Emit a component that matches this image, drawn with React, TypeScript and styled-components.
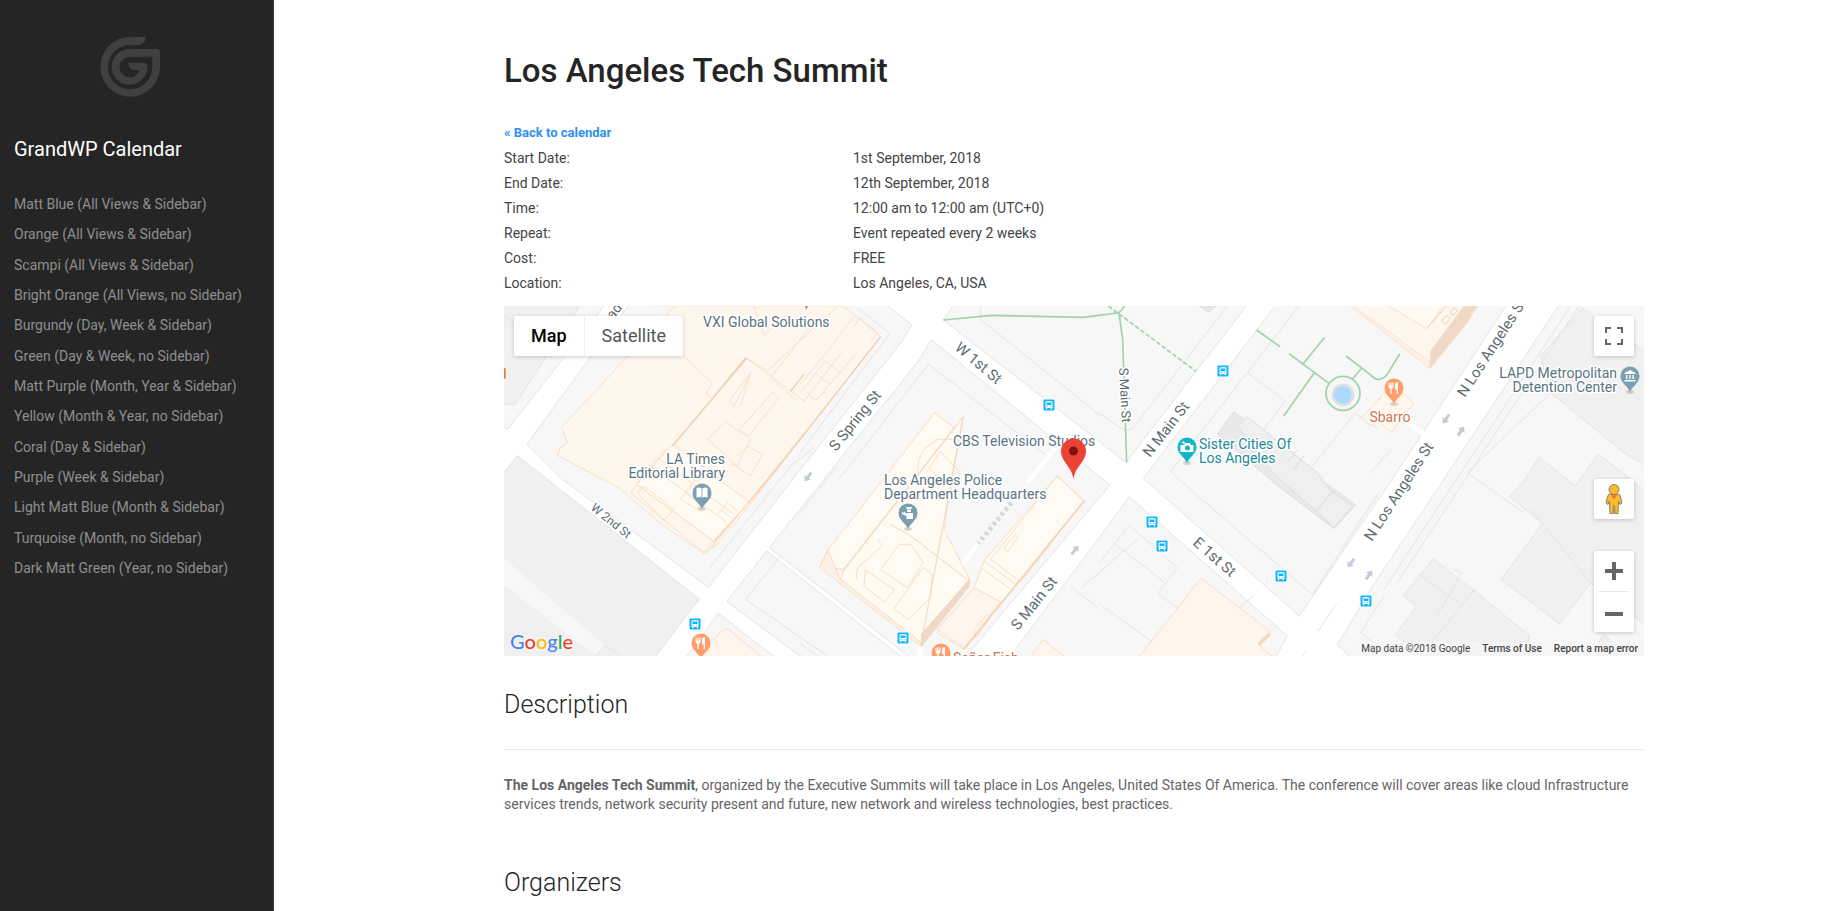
import React from "react";
import styled, { createGlobalStyle } from "styled-components";

const GlobalStyle = createGlobalStyle`
  *, *::before, *::after { box-sizing: border-box; }
  body {
    margin: 0;
    background: #fff;
    color: #444;
    font-family: Roboto, "Liberation Sans", sans-serif;
    font-size: 14px;
  }
`;

const Page = styled.div`
  display: flex;
  min-height: 100vh;
`;

const Sidebar = styled.aside`
  flex: 0 0 274px;
  padding: 37px 14px 0;
  background: #252525;
  border-right: 1px solid #3c3c3c;
`;

const SidebarLogo = styled.svg`
  display: block;
  width: 60px;
  height: 60px;
  margin-left: 86px;
  fill: #404040;
`;

const SidebarTitle = styled.h2`
  margin: 40px 0 0;
  color: #fff;
  font-size: 20px;
  font-weight: 400;
  line-height: 24px;
`;

const MenuList = styled.ul`
  display: grid;
  align-content: space-between;
  min-height: 394px;
  margin: 28px 0 0;
  padding: 0;
  list-style: none;
`;

const MenuLink = styled.a`
  display: block;
  color: #8f8f8f;
  font-size: 14px;
  font-weight: 400;
  line-height: 30px;
  text-decoration: none;
  white-space: nowrap;
`;

const Main = styled.main`
  flex: 1;
  min-width: 0;
  padding: 51px 0 0 34px;
`;

const Content = styled.article`
  max-width: 1140px;
  margin: 0 auto;
`;

const EventTitle = styled.h1`
  margin: 0;
  color: #252525;
  font-size: 33px;
  font-weight: 500;
  line-height: 40px;
`;

const BackLink = styled.a`
  display: inline-block;
  margin-top: 32px;
  color: #2d8ff0;
  font-size: 13px;
  font-weight: 700;
  line-height: 20px;
  text-decoration: none;
`;

const Details = styled.dl`
  display: grid;
  grid-template-columns: 349px 1fr;
  margin: 3px 0 10px;
  line-height: 25px;
`;

const Term = styled.dt``;

const Value = styled.dd`
  margin: 0;
`;

const MapPanel = styled.section`
  position: relative;
  height: 350px;
  overflow: hidden;
  background: #f7f7f7;
`;

const MapCanvas = styled.svg`
  display: block;
  width: 100%;
  height: 100%;
`;

const Controls = styled.div`
  position: absolute;
  inset: 10px 10px 24px;
  display: flex;
  justify-content: space-between;
  align-items: flex-start;
`;

const Card = styled.div`
  display: flex;
  border-radius: 2px;
  background: #fff;
  box-shadow: 0 1px 4px rgba(0, 0, 0, 0.2);
`;

const TypeButton = styled.button<{ $active?: boolean }>`
  height: 40px;
  padding: 0 17px 2px;
  border: 0;
  background: none;
  color: ${(p) => (p.$active ? "#000" : "#565656")};
  font: ${(p) => (p.$active ? 500 : 400)} 18px Roboto, sans-serif;
  & + & {
    border-left: 1px solid #efefef;
  }
`;

const SideControls = styled.div`
  display: flex;
  flex-direction: column;
  height: 316px;
`;

const Spacer = styled.div`
  flex: 1;
`;

const ControlCard = styled(Card)<{ $gap?: number }>`
  flex-direction: column;
  width: 40px;
  margin-top: ${(p) => p.$gap ?? 0}px;
`;

const IconButton = styled.button`
  display: grid;
  place-items: center;
  width: 40px;
  height: 40px;
  padding: 0 0 1px;
  border: 0;
  background: none;
`;

const Rule = styled.div`
  height: 1px;
  margin: 0 5px;
  background: #e6e6e6;
`;

const GoogleMark = styled.a`
  position: absolute;
  left: 6px;
  bottom: 2px;
  font: 500 20px/26px Lato, sans-serif;
  text-decoration: none;
  text-shadow: 0 0 2px #fff;
`;

const Letter = styled.span<{ $color: string }>`
  color: ${(p) => p.$color};
`;

const Attribution = styled.div`
  position: absolute;
  right: 0;
  bottom: 0;
  display: flex;
  background: rgba(245, 245, 245, 0.7);
  color: #444;
  font-size: 10px;
  line-height: 14px;
`;

const Credit = styled.span`
  padding: 0 6px;
`;

const CreditLink = styled.a`
  padding: 0 6px;
  color: #444;
  font-weight: 500;
  text-decoration: none;
`;

const SectionTitle = styled.h3<{ $top: number }>`
  margin: ${(p) => p.$top}px 0 0;
  color: #252525;
  font-size: 25px;
  font-weight: 300;
  line-height: 30px;
`;

const Divider = styled.hr`
  height: 1px;
  margin: 29px 0 26px;
  border: 0;
  background: #e7e7e7;
`;

const Text = styled.p`
  margin: 0;
  color: #666;
  line-height: 19px;
`;

const menu = [
  "Matt Blue (All Views & Sidebar)",
  "Orange (All Views & Sidebar)",
  "Scampi (All Views & Sidebar)",
  "Bright Orange (All Views, no Sidebar)",
  "Burgundy (Day, Week & Sidebar)",
  "Green (Day & Week, no Sidebar)",
  "Matt Purple (Month, Year & Sidebar)",
  "Yellow (Month & Year, no Sidebar)",
  "Coral (Day & Sidebar)",
  "Purple (Week & Sidebar)",
  "Light Matt Blue (Month & Sidebar)",
  "Turquoise (Month, no Sidebar)",
  "Dark Matt Green (Year, no Sidebar)",
];

const details = [
  ["Start Date:", "1st September, 2018"],
  ["End Date:", "12th September, 2018"],
  ["Time:", "12:00 am to 12:00 am (UTC+0)"],
  ["Repeat:", "Event repeated every 2 weeks"],
  ["Cost:", "FREE"],
  ["Location:", "Los Angeles, CA, USA"],
];

const google: [string, string][] = [
  ["G", "#4285f4"],
  ["o", "#ea4335"],
  ["o", "#fbbc05"],
  ["g", "#4285f4"],
  ["l", "#34a853"],
  ["e", "#ea4335"],
];

const SLATE = "#7b9eb0";
const ORANGE = "#ff9e67";
const TEAL = "#12b5cb";

const pinShapes = {
  book: <path d="M-5.500-5Q-2.500-6-.4-4.500V4.500Q-2.500 3.500-5.500 4.500ZM5.500-5Q2.500-6 .4-4.500V4.500Q2.500 3.500 5.500 4.500Z" />,
  police: <path d="M-2-6H4L3-3.500H-1ZM-1-3H3V-1H-1ZM-1.500 0H5V6H-1.500V3L-6 1V-1L-4 0-4-2-2 1Z" />,
  camera: <path fillRule="evenodd" d="M-6.500-2H-3L-2-4H3L4-2H6.500V5H-6.500ZM-5.500-5H-4V-6H-3V-5H-2V-4H-3V-3H-4V-4H-5.500ZM.5-1.500A2.500 2.500 0 1 0 .5 3.500 2.500 2.500 0 1 0 .5-1.500Z" />,
  food: <path d="M-5.500-5.500H-4.500V-2.500H-3.700V-5.500H-2.500V-2.500H-1.700V-5.500H-.5V-1Q-.8.5-2.300.8V6H-3.700V.8Q-5.200.5-5.500-1ZM1-4Q1.500-6 4-6V6H2.700V1.500H1Z" />,
  civic: <path d="M0-6 5.500-3V-2H-5.500V-3ZM-4-1H-2.500V3H-4ZM-.7-1H.7V3H-.7ZM2.500-1H4V3H2.500ZM-5.500 4H5.500V5.500H-5.500Z" />,
};

function Pin({ x, y, color, shape }: { x: number; y: number; color: string; shape: keyof typeof pinShapes }) {
  return (
    <g transform={`translate(${x} ${y})`}>
      <ellipse cy="16" rx="4" ry="2" fill="#000" opacity=".14" />
      <path d="M0 16.500C-1 11-9.500 7.500-9.500 0A9.500 9.500 0 0 1 9.500 0C9.500 7.500 1 11 0 16.500Z" fill={color} />
      <g fill="#fff">{pinShapes[shape]}</g>
    </g>
  );
}

function Bus({ x, y }: { x: number; y: number }) {
  return (
    <g transform={`translate(${x} ${y})`}>
      <rect x="-6.500" y="-6.500" width="13" height="13" rx="1" fill="#fff" />
      <rect x="-5.500" y="-5.500" width="11" height="11" rx="1" fill="#12b5ff" />
      <path fillRule="evenodd" fill="#fff" d="M-3.500-3.500Q0-4.500 3.500-3.500V3H3V4.200H1.800V3H-1.800V4.200H-3V3H-3.500ZM-2.500-2.500V0H2.500V-2.500ZM-2.500 1.200H-1.300V2H-2.500ZM1.300 1.200H2.500V2H1.300Z" />
    </g>
  );
}

function Arrow({ x, y, angle, color = "#c5cccc" }: { x: number; y: number; angle: number; color?: string }) {
  return (
    <path
      transform={`translate(${x} ${y}) rotate(${angle})`}
      fill={color}
      d="M-5.500-1.500H.5V-4L5.500 0 .5 4V1.500H-5.500Z"
    />
  );
}

type LabelProps = {
  x: number;
  y: number;
  angle?: number;
  color?: string;
  size?: number;
  anchor?: "start" | "middle" | "end";
  children: string;
};

function Label({ x, y, angle = 0, color = "#5b7482", size = 14, anchor = "start", children }: LabelProps) {
  return (
    <text
      transform={`translate(${x} ${y}) rotate(${angle})`}
      textAnchor={anchor}
      fontSize={size}
      fill={color}
      stroke="#fff"
      strokeWidth="3"
      strokeLinejoin="round"
      paintOrder="stroke"
    >
      {children}
    </text>
  );
}

const STREET = "#5f6b70";

function StreetMap() {
  return (
    <MapCanvas viewBox="0 0 1140 350" preserveAspectRatio="xMidYMid slice" fontFamily="Roboto, sans-serif" role="img" aria-label="Map of Los Angeles">
      <g transform="scale(.333333)" strokeWidth="3">
        <rect width="3420" height="1050" fill="#fff" />
        {/* city blocks */}
        <g fill="#f7f7f7" stroke="#e3e3e3">
          <path d="M-9-9H307L11 370-9 356Z" />
          <path d="M379-9 68 415 178 522 613 844 888 492 1193 107 1223 57 1142-9Z" />
          <path d="M586 879 133 522 40 449-9 511V1059H449Z" fill="#f0f0f0" />
          <path d="M643 922 543 1059H820Z" />
          <path d="M668 887 788 735 1200 1059H900Z" />
          <path d="M1281 100 1246 162 958 522 796 725 1224 1059H1380L1818 537Z" />
          <path d="M1318 42 1354-9H2234L1866 469Z" />
          <path d="M1918 517 2320-9H3012L2663 522 2386 930Z" />
          <path d="M1876 572 1788 692 1512 1059H2312L2350 990Z" />
          <path d="M3169-9 2818 522 2598 852 2500 1017 2545 1059H3429V-9Z" />
        </g>
        {/* darker lots */}
        <g fill="#f0f0f0" stroke="#e3e3e3">
          <path d="M-9-9H234L33 295H-9ZM-9 20 40 60" />
          <path d="M0 757 348 1059H285L0 837Z" fill="#f7f7f7" stroke="none" />
          <path d="M275 1050 303 1018 350 1050" />
          <path d="M3110 150 3235 6 3429 140V480L3360 440 3350 432 3140 260Z" />
          <path d="M3016 572 3062 522 3100 460 3104 452 3214 540 3283 444 3429 560V960L3260 830 3166 953 2992 820 3116 652Z" />
          <path d="M2787 759 2698 868 2737 902 2674 986 2760 1059H3060L3077 990 2910 853Z" />
          <path d="M3300 985 3270 1030 3290 1059H3380Z" />
        </g>
        <g fill="none" stroke="#e3e3e3">
          <path d="M1158 82 888 440M1158 82 1060 5M1273 175 1005 520M1273 175 1630 450M1430 0V40L1790 330M1788 322Q1850 370 1866 372 1890 372 1900 350L2170 0M2384 0 2230 200 2000 495 2030 525 2425 866 2625 560M2230 200 2344 285 2280 370" />
          <path d="M2425 480 2553 322 2620 366M3200 0 2640 850M3225 0 2680 830M3140 260 2890 500 3060 620M2848 790 2872 800 2820 896 2790 940M2747 806 2872 896M2910 853 2790 1000M3080 610 3260 830M2570 980 2640 870M2570 980 2660 1050M725 880 830 750M725 880 970 1050M888 620 1000 480" />
          <path d="M1876 658 1830 715 1788 770M1876 658 2020 785 1962 862 2110 978 2250 870M1834 715 1980 828M1788 895 1990 1040M1700 840 1788 910M1730 848 1900 700M2498 892 2443 975M2408 1032 2396 1050M2663 430 2598 500M888 1012 940 1050M613 790 860 480 930 425" />
        </g>
        {/* civic complex on N Main St */}
        <g fill="#e9e9e9" stroke="#dcdcdc">
          <path d="M2140 385 2190 317 2450 522 2555 596 2490 668 2310 530Z" />
          <path d="M2200 360 2230 332 2440 500 2484 558 2437 615 2310 505Z" fill="#efefef" />
          <path d="M2484 558 2546 600 2490 665 2437 615ZM2350 470 2380 430M2370 490 2400 450" fill="#efefef" />
          <path d="M2085 0 2115 18 2135 0Z" />
        </g>
        {/* newspaper building */}
        <g fill="#fff6ee" stroke="#fadfc5">
          <path d="M440 0H1018L1130 92 742 590 640 715 600 742 480 660 345 545 160 448 170 425 190 410 172 365 520-9Z" />
          <path d="M505 420 625 275 605 265 625 232 530 140M625 275 725 155 900 285 1012 140M725 155 790 195 1000 0M880 285 800 215 920 60M742 590 900 380M710 300 740 200 690 302 675 285 740 200M805 260 825 275 735 390 705 372ZM612 400 665 345 695 370 740 400 700 480ZM700 450 730 420 775 445 740 510 680 470" fill="none" />
          <path d="M735 590 608 740 630 715 640 680Z" fill="#f2d9c3" />
          <path d="M505 415 735 588 628 705 398 535Z" fill="#fffaf2" />
          <path d="M398 535 380 560 600 740 628 705 398 535 460 455 690 625M440 480 670 650M485 430 448 480 490 510M530 580 575 520 620 560 580 610ZM545 560 590 595M560 540 605 580M640 625 670 590 700 615M650 610 680 635M400 560 420 540 510 610 480 645ZM420 490 460 520M430 475 470 505" fill="none" />
          <path d="M888 235 960 150 1050 30M888 260 965 165 1010 200M905 255 935 285 1055 145M930 200 980 235M1130 92 888 400" fill="none" />
          <path d="M1052 60 1067 35 1120 80 1100 108M750 0 780 88 850 25" fill="none" />
        </g>
        <path d="M505 420 730 155M662 232 724 157M860 255 900 205M1130 92 888 400M888 400 732 592" fill="none" stroke="#efcfb1" strokeWidth="4" />
        {/* alleys */}
        <path d="M1655 425 1570 530M1420 715 1360 795 1248 990V1050" stroke="#fff" strokeWidth="14" fill="none" />
        <path d="M1522 590 1424 712" stroke="#d5d8d8" strokeWidth="14" strokeDasharray="10 9" fill="none" />
        {/* police headquarters */}
        <g fill="#fffaf2" stroke="#fadcc0">
          <path d="M1292 320 1350 365 1022 790 946 784 972 732Z" />
          <path d="M972 732 946 784 1250 1020 1252 985 1008 820Z" fill="#fdf0e4" />
          <path d="M1010 820 1022 785 1378 332 1342 520 1320 670 1398 822 1252 1010Z" />
          <path d="M1220 715 1258 770 1210 845 1135 795 1132 788 1186 715ZM1258 784 1285 805 1280 875 1212 940 1170 908ZM1084 792 1172 850 1140 888 1080 840ZM1060 820Q1045 790 1090 760L1135 720 1120 700M1245 460 1260 430 1300 400H1360M1245 460 1240 500 1265 530M1308 435 1370 500 1340 545 1275 490Z" fill="none" />
          <path d="M1378 332 1252 1010M1378 332 1022 790M1160 655 1220 690 1390 820" fill="none" stroke="#f5d5b8" />
          <path d="M1252 985 1396 820V840L1252 1022Z" fill="#efd9c6" stroke="#efd9c6" />
        </g>
        {/* theatre building */}
        <g fill="#fffaf2" stroke="#fadcc0">
          <path d="M1660 510 1740 585 1380 1030 1300 980 1410 845 1440 765Z" />
          <path d="M1410 845 1490 888 1380 1025 1300 970Z" fill="#fff5ed" />
          <path d="M1660 510 1740 585 1550 828 1460 760ZM1440 765 1535 835M1430 785 1520 850M1500 725 1535 685 1542 692 1510 738ZM1410 970 1450 925 1460 935 1415 995Z" fill="none" />
          <path d="M1742 583 1380 1030" fill="none" stroke="#f2d4ba" strokeWidth="5" />
        </g>
        {/* southern lots */}
        <g fill="#fff5ec" stroke="#fadcc0">
          <path d="M2092 817 2298 977 2262 1015 2312 1059H1900Z" />
          <path d="M655 972Q665 965 675 972L780 1059H575Z" />
          <path d="M1618 1000 1690 1059H1575Z" />
          <path d="M2263 1010 2298 977V990L2268 1018Z" fill="#efd9c6" />
        </g>
        {/* courthouse and restaurant */}
        <g fill="#fff6ee" stroke="#fadfc5">
          <path d="M2535-9 2778 168 2920 0V-9Z" />
          <path d="M2640-9 2768 68 2825-9Z" fill="#fffaf2" />
          <path d="M2778 168V188L2540 0" fill="#fdf0e4" />
          <path d="M2780 135 2880 0H2920L2890 50 2778 188Z" fill="#efd9c6" />
          <path d="M2768 68 2828 0M2812 45 2828 28 2840 38 2824 55ZM2838 20 2850 5 2860 14 2848 28Z" fill="none" stroke="#efcfb1" />
          <path d="M2575 335 2615 290 2668 230 2728 292 2663 378 2620 345 2600 360Z" />
        </g>
        <path d="M2705 345 2760 385" stroke="#fff" strokeWidth="16" />
        {/* footpaths */}
        <g fill="none" stroke="#9fd3a9" strokeWidth="5">
          <path d="M1318 42 1463 28 1738 34 1845 20 1856 102 1868 469M1845 20 1862 0" />
          <path d="M1813 0 2076 196" strokeDasharray="14 6" />
          <path d="M2258 72 2328 122M2355 143 2475 232M2397 174 2462 94M2430 202 2339 330M2545 220 2572 187M2526 150 2598 205Q2625 235 2650 205L2687 144" />
          <circle cx="2517" cy="262" r="51" />
        </g>
        <circle cx="2517" cy="267" r="30" fill="#aadaff" stroke="#e0e0e0" strokeWidth="8" />
        <path d="M2 187V218" stroke="#e2794c" strokeWidth="6" />
      </g>

      <Arrow x={304} y={171} angle={128} />
      <Arrow x={571} y={244} angle={-52} />
      <Arrow x={847} y={257} angle={128} color="#c6cada" />
      <Arrow x={865} y={269} angle={-55} color="#c6cada" />
      <Arrow x={942} y={113} angle={125} />
      <Arrow x={957} y={125} angle={-57} />

      <Label x={109} y={14} angle={-52} color={STREET}>ad</Label>
      <Label x={332} y={146} angle={-51} color={STREET} size={15}>S Spring St</Label>
      <Label x={450} y={43} angle={40} color={STREET} size={15}>W 1st St</Label>
      <Label x={86} y={203} angle={39} color={STREET} size={12}>W 2nd St</Label>
      <Label x={615} y={62} angle={87} color={STREET} size={13}>S Main St</Label>
      <Label x={646} y={152} angle={-52} color={STREET} size={15}>N Main St</Label>
      <Label x={514} y={325} angle={-51} color={STREET} size={15}>S Main St</Label>
      <Label x={688} y={238} angle={41} color={STREET} size={15}>E 1st St</Label>
      <Label x={961} y={92} angle={-57} color={STREET} size={15}>N Los Angeles St</Label>
      <Label x={868} y={236} angle={-57} color={STREET} size={15}>N Los Angeles St</Label>

      <Label x={199} y={21}>VXI Global Solutions</Label>
      <Label x={221} y={158} anchor="end">LA Times</Label>
      <Label x={221} y={172} anchor="end">Editorial Library</Label>
      <Label x={449} y={140}>CBS Television Studios</Label>
      <Label x={380} y={179}>Los Angeles Police</Label>
      <Label x={380} y={193}>Department Headquarters</Label>
      <Label x={695} y={143} color="#1a8c96">Sister Cities Of</Label>
      <Label x={695} y={157} color="#1a8c96">Los Angeles</Label>
      <Label x={886} y={116} color="#d2734c" anchor="middle">Sbarro</Label>
      <Label x={1113} y={72} anchor="end">LAPD Metropolitan</Label>
      <Label x={1113} y={86} anchor="end">Detention Center</Label>
      <Label x={449} y={357} color="#d2734c">Señor Fish</Label>

      <Bus x={191} y={318} />
      <Bus x={545} y={99} />
      <Bus x={399} y={332} />
      <Bus x={719} y={65} />
      <Bus x={648} y={216} />
      <Bus x={658} y={240} />
      <Bus x={777} y={270} />
      <Bus x={862} y={295} />

      <Pin x={198} y={187} color={SLATE} shape="book" />
      <Pin x={404} y={207} color={SLATE} shape="police" />
      <Pin x={683} y={141} color={TEAL} shape="camera" />
      <Pin x={890} y={82} color={ORANGE} shape="food" />
      <Pin x={1126} y={70} color={SLATE} shape="civic" />
      <Pin x={197} y={337} color={ORANGE} shape="food" />
      <Pin x={437} y={347} color={ORANGE} shape="food" />
      <path d="M301 0H304L302.500 4Z" fill={SLATE} />

      <g transform="translate(569.500 145)">
        <path d="M0 28.500C-1 16-12.500 11-12.500 0A12.500 12.500 0 0 1 12.500 0C12.500 11 1 16 0 28.500Z" fill="#ea4335" />
        <circle r="4.500" fill="#811411" />
      </g>
    </MapCanvas>
  );
}

export default function App() {
  return (
    <>
      <GlobalStyle />
      <Page>
        <Sidebar>
          <SidebarLogo viewBox="300 111 180 180" aria-hidden="true">
            <path d="M437 111H390A89.500 89.500 0 1 0 480 201V160Q480 147 467 147H390A53.500 53.500 0 1 0 442 201Q442 188 430 188H384Q386 210 406 210H419A31 31 0 1 1 390 170H457V201A66.500 66.500 0 1 1 390 135H413Q435 135 437 111Z" />
          </SidebarLogo>
          <SidebarTitle>GrandWP Calendar</SidebarTitle>
          <nav>
            <MenuList>
              {menu.map((item) => (
                <li key={item}>
                  <MenuLink href="#">{item}</MenuLink>
                </li>
              ))}
            </MenuList>
          </nav>
        </Sidebar>
        <Main>
          <Content>
            <EventTitle>Los Angeles Tech Summit</EventTitle>
            <BackLink href="#">« Back to calendar</BackLink>
            <Details>
              {details.map(([term, value]) => (
                <React.Fragment key={term}>
                  <Term>{term}</Term>
                  <Value>{value}</Value>
                </React.Fragment>
              ))}
            </Details>
            <MapPanel>
              <StreetMap />
              <Controls>
                <Card>
                  <TypeButton $active>Map</TypeButton>
                  <TypeButton>Satellite</TypeButton>
                </Card>
                <SideControls>
                  <ControlCard>
                    <IconButton aria-label="Toggle fullscreen">
                      <svg width="18" height="18" fill="#666" aria-hidden="true">
                        <path d="M0 0H6V2H2V6H0ZM12 0H18V6H16V2H12ZM0 12H2V16H6V18H0ZM16 12H18V18H12V16H16Z" />
                      </svg>
                    </IconButton>
                  </ControlCard>
                  <Spacer />
                  <ControlCard>
                    <IconButton aria-label="Street View">
                      <svg width="18" height="30" viewBox="0 0 18 30" aria-hidden="true">
                        <path d="M5 10H13Q15 10 15.500 13L17 19 15 20.500 13.500 17 13 29.500H9.700V22H8.300V29.500H5L4.500 17 3 20.500 1 19 2.500 13Q3 10 5 10Z" fill="#fbbc2c" stroke="#8b8168" strokeWidth="1" />
                        <path d="M5 10H13L9 15.500Z" fill="#e8833a" />
                        <circle cx="9" cy="5.500" r="5" fill="#fbbc2c" stroke="#8b8168" strokeWidth="1" />
                      </svg>
                    </IconButton>
                  </ControlCard>
                  <ControlCard $gap={32}>
                    <IconButton aria-label="Zoom in">
                      <svg width="18" height="18" fill="#666" aria-hidden="true">
                        <path d="M7 0H11V7H18V11H11V18H7V11H0V7H7Z" />
                      </svg>
                    </IconButton>
                    <Rule />
                    <IconButton aria-label="Zoom out">
                      <svg width="18" height="18" fill="#666" aria-hidden="true">
                        <path d="M0 9H18V13H0Z" />
                      </svg>
                    </IconButton>
                  </ControlCard>
                </SideControls>
              </Controls>
              <GoogleMark href="#" aria-label="Google">
                {google.map(([letter, color], i) => (
                  <Letter key={i} $color={color}>{letter}</Letter>
                ))}
              </GoogleMark>
              <Attribution>
                <Credit>Map data ©2018 Google</Credit>
                <CreditLink href="#">Terms of Use</CreditLink>
                <CreditLink href="#">Report a map error</CreditLink>
              </Attribution>
            </MapPanel>
            <SectionTitle $top={34}>Description</SectionTitle>
            <Divider />
            <Text>
              <strong>The Los Angeles Tech Summit</strong>, organized by the Executive Summits will take place in Los
              Angeles, United States Of America. The conference will cover areas like cloud Infrastructure services
              trends, network security present and future, new network and wireless technologies, best practices.
            </Text>
            <SectionTitle $top={54}>Organizers</SectionTitle>
          </Content>
        </Main>
      </Page>
    </>
  );
}
